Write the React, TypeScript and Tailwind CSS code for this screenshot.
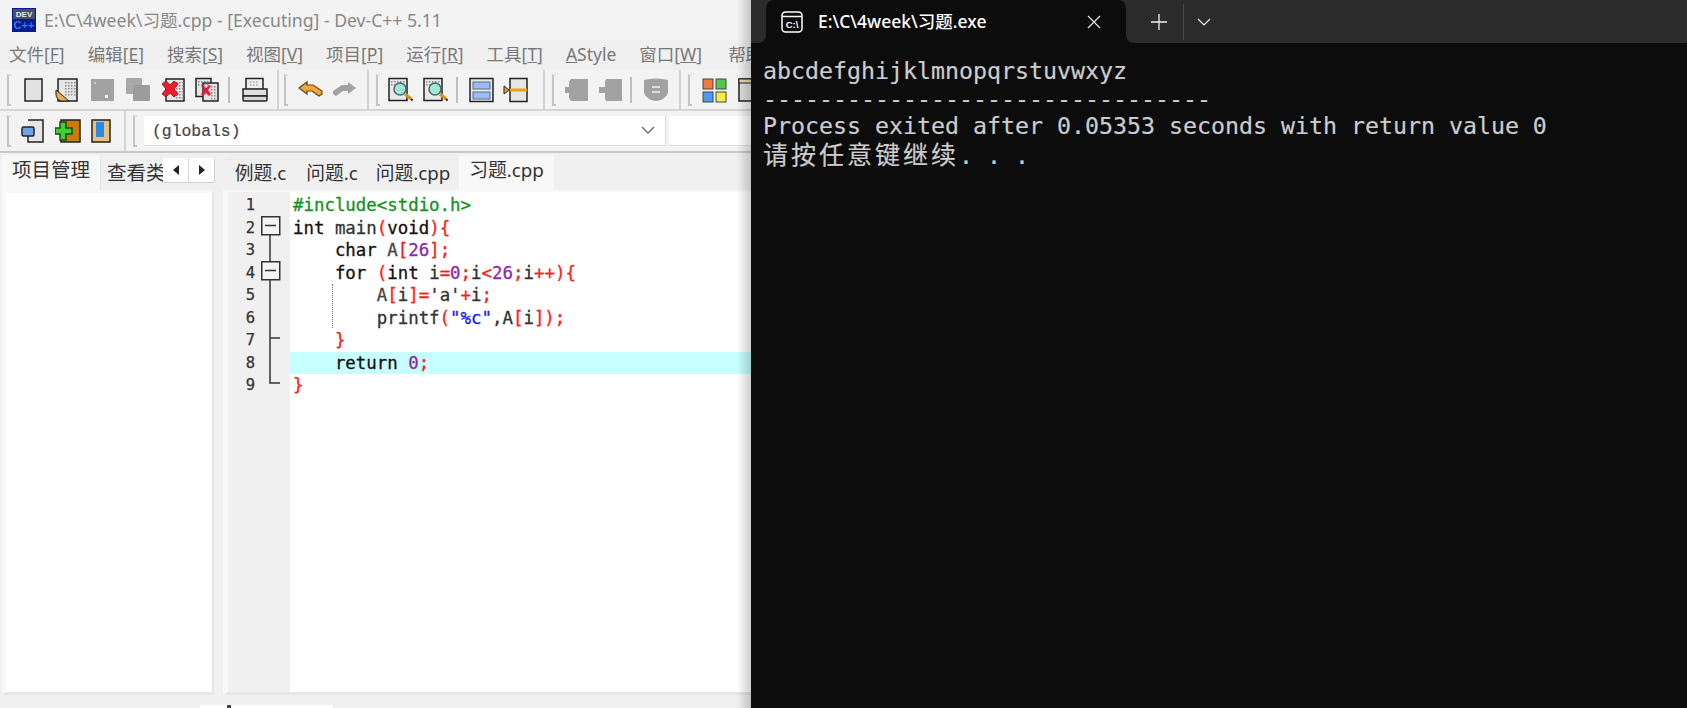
import React from "react";

const Grip = ({ className = "" }: { className?: string }) => (
  <div className={`w-[4px] h-[32px] shrink-0 border-l-2 border-b-2 border-t-2 border-l-[#c4c4c4] border-t-[#e0e0e0] border-b-[#c4c4c4] rounded-bl-[1px] ${className}`} />
);
const Sep = ({ className = "" }: { className?: string }) => <div className={`w-[2px] h-[26px] shrink-0 bg-[#c0c0c0] ${className}`} />;

const Ico = ({ w = 26, children, className = "" }: { w?: number; children: React.ReactNode; className?: string }) => (
  <svg width={w} height={26} viewBox={`0 0 ${w} 26`} className={`shrink-0 ${className}`}>
    {children}
  </svg>
);

const dots = (x: number, y: number, cols: number, rows: number) => {
  const r: React.ReactNode[] = [];
  for (let i = 0; i < cols; i++)
    for (let j = 0; j < rows; j++)
      r.push(<rect key={`${i}-${j}`} x={x + i * 3} y={y + j * 3} width={1.5} height={1.5} fill="#8a8a8a" />);
  return r;
};

const Magnifier = ({ className = "" }: { className?: string }) => (
  <Ico w={25} className={className}>
    <rect x="1" y="1.5" width="18" height="22" fill="#e8e8e8" stroke="#222" strokeWidth="1.5" />
    {dots(3, 4, 5, 2)}
    <circle cx="12" cy="12" r="6" fill="#9fe8d8" stroke="#4a6a60" strokeWidth="1.5" />
    <path d="M17 17l6 5" stroke="#d8921c" strokeWidth="3" />
    <path d="M23 22l1.5 1.5" stroke="#222" strokeWidth="2" />
  </Ico>
);

const Toolbar1 = () => (
  <div className="flex items-center h-[41px] border-b-2 border-[#d4d4d4] bg-[#f3f3f3] shrink-0">
    <div className="flex items-center h-full w-[279px] shrink-0 border-r-2 border-[#d2d2d2] pl-[7px]">
      <Grip />
      <Ico w={20} className="ml-[13px]">
        <rect x="1" y="2" width="17" height="22" fill="#e2e2e2" stroke="#222" strokeWidth="1.5" />
      </Ico>
      <Ico w={24} className="ml-[11px]">
        <rect x="3" y="2" width="19" height="22" fill="#e6e6e6" stroke="#222" strokeWidth="1.5" />
        {dots(10, 5, 4, 5)}
        <path d="M1 13l13 11H6q-5-2-5-7z" fill="#f2a94e" stroke="#222" strokeWidth="1" />
      </Ico>
      <Ico w={25} className="ml-[11px]">
        <rect x="1" y="2" width="23" height="22" fill="#a2a2a2" />
        <rect x="15" y="18" width="3" height="3" fill="#f2f2f2" />
        <rect x="4" y="5" width="2" height="2" fill="#c8c8c8" />
      </Ico>
      <Ico w={24} className="ml-[11px]">
        <rect x="0" y="1" width="16" height="16" rx="1" fill="#a8a8a8" />
        <rect x="7" y="8" width="17" height="16" rx="1" fill="#9c9c9c" />
      </Ico>
      <Ico w={24} className="ml-[11px]">
        <rect x="5" y="2" width="18" height="22" fill="#e4e4e4" stroke="#222" strokeWidth="1.5" />
        {dots(15, 5, 3, 6)}
        <path d="M1 7l4-3 4 4 4-4 4 3-4 5 4 5-4 3-4-4-4 4-4-3 4-5z" fill="#ee1c2c" stroke="#7a1018" strokeWidth="0.8" />
      </Ico>
      <Ico w={24} className="ml-[10px]">
        <rect x="1" y="1.5" width="15" height="18" fill="#e4e4e4" stroke="#222" strokeWidth="1.5" />
        <rect x="8" y="6" width="15" height="18" fill="#e4e4e4" stroke="#222" strokeWidth="1.5" />
        {dots(3, 4, 4, 2)}
        {dots(16, 9, 2, 5)}
        <path d="M6 9l2-1 3 3 3-3 2 1-3 4 3 4-2 2-3-3-3 3-2-2 3-4z" fill="#e81c3a" />
      </Ico>
      <Sep className="ml-[9px]" />
      <Ico w={26} className="ml-[12px]">
        <rect x="4" y="1.5" width="17" height="11" fill="#eee" stroke="#222" strokeWidth="1.5" />
        <path d="M8 5h9M8 8h9" stroke="#888" strokeWidth="1" strokeDasharray="1.5 1.5" />
        <rect x="1" y="12" width="24" height="7" fill="#e0e0e0" stroke="#222" strokeWidth="1.5" />
        <rect x="1" y="19" width="24" height="5" rx="1" fill="#d6d6d6" stroke="#222" strokeWidth="1.5" />
      </Ico>
    </div>
    <div className="flex items-center h-full w-[90px] shrink-0 border-r-2 border-[#d2d2d2] pl-[5px]">
      <Grip />
      <Ico w={25} className="ml-[10px]">
        <path d="M1 11L9 5v3h6l9 6v3l-3 2-7-5H9v3z" fill="#f2a63c" stroke="#5c4a1e" strokeWidth="1.2" />
      </Ico>
      <Ico w={25} className="ml-[9px]">
        <path d="M24 11L16 5v3h-6L1 14v3l3 2 7-5h5v3z" fill="#a2a2a2" />
      </Ico>
    </div>
    <div className="flex items-center h-full w-[176px] shrink-0 border-r-2 border-[#d2d2d2] pl-[7px]">
      <Grip />
      <Magnifier className="ml-[8px]" />
      <Magnifier className="ml-[10px]" />
      <Sep className="ml-[8px]" />
      <Ico w={25} className="ml-[11px]">
        <rect x="1" y="1.5" width="23" height="23" fill="#e6e6e6" stroke="#222" strokeWidth="1.5" />
        <rect x="4" y="5" width="17" height="7" fill="#9cbcf0" stroke="#5a6a90" />
        <rect x="4" y="15" width="17" height="7" fill="#9cbcf0" stroke="#5a6a90" />
      </Ico>
      <Ico w={25} className="ml-[9px]">
        <rect x="7" y="1.5" width="17" height="23" fill="#e6e6e6" stroke="#222" strokeWidth="1.5" />
        <rect x="7" y="11.5" width="17" height="3" fill="#eca01c" />
        <path d="M1 9l5 4-5 4z" fill="#eca01c" stroke="#222" />
      </Ico>
    </div>
    <div className="flex items-center h-full w-[136px] shrink-0 border-r-2 border-[#d2d2d2] pl-[7px]">
      <Grip />
      <Ico w={25} className="ml-[8px]">
        <path d="M7 2h17v22H7l-2-3V16H1V10h4V5z" fill="#a2a2a2" />
      </Ico>
      <Ico w={25} className="ml-[9px]">
        <path d="M8 2h16v22H8l-1-2V16H1V10h6V4z" fill="#a2a2a2" />
      </Ico>
      <Sep className="ml-[7px]" />
      <Ico w={25} className="ml-[11px]">
        <path d="M1 3q12-3 24 0v13q-3 7-12 8-9-1-12-8z" fill="#a2a2a2" />
        <path d="M9 10h8M9 15h8" stroke="#f2f2f2" strokeWidth="1.5" />
      </Ico>
    </div>
    <div className="flex items-center h-full pl-[7px] shrink-0">
      <Grip />
      <Ico w={25} className="ml-[10px]">
        <rect x="1" y="2" width="10" height="10" fill="#f07a3c" stroke="#444" />
        <rect x="14" y="2" width="10" height="10" fill="#52c84a" stroke="#444" />
        <rect x="1" y="15" width="10" height="10" fill="#4a9cf0" stroke="#444" />
        <rect x="14" y="15" width="10" height="10" fill="#f4ec42" stroke="#444" />
      </Ico>
      <Ico w={25} className="ml-[11px]">
        <rect x="1" y="2" width="23" height="22" fill="#e0e0e0" stroke="#222" strokeWidth="1.5" />
        <rect x="1" y="2" width="23" height="4" fill="#eed9b0" stroke="#222" strokeWidth="1" />
      </Ico>
    </div>
  </div>
);

const Toolbar2 = () => (
  <div className="flex items-center h-[42px] border-b-2 border-[#c8c8c8] bg-[#f3f3f3] shrink-0">
    <div className="flex items-center h-full w-[126px] shrink-0 border-r-2 border-[#d2d2d2] pl-[7px]">
      <Grip />
      <Ico w={24} className="ml-[10px]">
        <path d="M7 2h15v22H7v-6" fill="#e4e4e4" stroke="#222" strokeWidth="1.5" />
        <rect x="1" y="9" width="12" height="9" rx="1.5" fill="#6fa4e8" stroke="#223" strokeWidth="1.5" />
      </Ico>
      <Ico w={26} className="ml-[10px]">
        <rect x="6" y="2" width="19" height="22" fill="#cc7a0c" stroke="#222" strokeWidth="1.5" />
        <path d="M5 4h6v6h6v6h-6v6H5v-6H0v-6h5z" fill="#40d030" stroke="#1a4a14" strokeWidth="1.5" />
      </Ico>
      <Ico w={20} className="ml-[10px]">
        <rect x="1" y="2" width="18" height="22" fill="#e8c080" stroke="#222" strokeWidth="1.5" />
        <rect x="5" y="4" width="8" height="15" fill="#2e8ae0" />
      </Ico>
    </div>
    <div className="flex items-center h-full flex-1 pl-[7px] min-w-0">
      <Grip />
      <div className="ml-[7px] w-[522px] h-[30px] bg-white border-b border-r border-[#dcdcdc] flex items-center justify-between pl-[8px] pr-[10px] shrink-0">
        <span className="font-['Liberation_Mono',monospace] text-[16.4px] text-[#444] [-webkit-text-stroke:0.2px] pt-[3px]">(globals)</span>
        <svg width="14" height="9" viewBox="0 0 14 9">
          <path d="M1 1l6 6 6-6" fill="none" stroke="#666" strokeWidth="1.3" />
        </svg>
      </div>
      <div className="ml-[3px] flex-1 h-[30px] bg-white border-b border-[#dcdcdc]" />
    </div>
  </div>
);

const tabText = "font-['Noto_Sans','Noto_Sans_CJK_SC',sans-serif] text-[18.8px] text-[#333]";

const T = ({ c, children }: { c: string; children: React.ReactNode }) => <span style={{ color: c }}>{children}</span>;
const R = ({ children }: { children: React.ReactNode }) => <T c="#ff1a1a">{children}</T>;
const P = ({ children }: { children: React.ReactNode }) => <T c="#8b2aa8">{children}</T>;

const code: React.ReactNode[] = [
  <T c="#14921e">{"#include<stdio.h>"}</T>,
  <><T c="#111">int </T><T c="#333">main</T><R>(</R><T c="#111">void</T><R>){"{"}</R></>,
  <><T c="#111">    char </T><T c="#444">A</T><R>[</R><P>26</P><R>];</R></>,
  <><T c="#111">    for </T><R>(</R><T c="#111">int </T><T c="#333">i</T><R>=</R><P>0</P><R>;</R><T c="#333">i</T><R>{"<"}</R><P>26</P><R>;</R><T c="#333">i</T><R>++){"{"}</R></>,
  <><T c="#444">        A</T><R>[</R><T c="#333">i</T><R>]=</R><T c="#333">'a'</T><R>+</R><T c="#333">i</T><R>;</R></>,
  <><T c="#333">        printf</T><R>(</R><T c="#1a1af0">"%c"</T><T c="#333">,A</T><R>[</R><T c="#333">i</T><R>]);</R></>,
  <><R>{"    }"}</R></>,
  <><T c="#111">    return </T><P>0</P><R>;</R></>,
  <><R>{"}"}</R></>,
];

const Fold = () => (
  <svg width="27" height="203" viewBox="0 0 27 203" className="shrink-0">
    <path d="M9 35V191H19M9 146H19" fill="none" stroke="#333" strokeWidth="1.5" />
    <rect x="0.75" y="24.75" width="18" height="18" fill="#f4f4f4" stroke="#333" strokeWidth="1.5" />
    <path d="M4 33.5h11" stroke="#333" strokeWidth="1.5" />
    <rect x="0.75" y="69.75" width="18" height="18" fill="#f4f4f4" stroke="#333" strokeWidth="1.5" />
    <path d="M4 78.5h11" stroke="#333" strokeWidth="1.5" />
  </svg>
);

const Left = () => (
  <div className="w-[751px] shrink-0 h-full bg-[#f0f0f0] flex flex-col overflow-hidden relative">
    <div className="h-[40px] bg-[#f3f3f3] flex items-center pl-[12px] shrink-0">
      <svg width="24" height="24" viewBox="0 0 24 24" className="shrink-0">
        <rect width="24" height="24" fill="#0a1a90" />
        <rect x="1" y="1" width="22" height="10" fill="#44506a" />
        <text x="12" y="9" textAnchor="middle" fontSize="8" fontWeight="700" fill="#e8e8f0" fontFamily="Liberation Sans">DEV</text>
        <text x="12" y="21" textAnchor="middle" fontSize="11" fontWeight="700" fill="#3a7ae0" fontFamily="Liberation Sans">C++</text>
      </svg>
      <span className="ml-[8px] font-['Noto_Sans','Noto_Sans_CJK_SC',sans-serif] text-[17.6px] text-[#888] whitespace-nowrap">E:\C\4week\习题.cpp - [Executing] - Dev-C++ 5.11</span>
    </div>
    <div className="h-[30px] bg-[#f0f0f0] flex items-center pl-[9px] pb-[2px] gap-[23px] font-['Noto_Sans','Noto_Sans_CJK_SC',sans-serif] text-[17.5px] text-[#787878] whitespace-nowrap shrink-0">
      {[["文件", "F"], ["编辑", "E"], ["搜索", "S"], ["视图", "V"], ["项目", "P"], ["运行", "R"], ["工具", "T"]].map(([a, b]) => (
        <span key={a}>{a}[<span className="underline">{b}</span>]</span>
      ))}
      <span><span className="underline">A</span>Style</span>
      <span>窗口[<span className="underline">W</span>]</span>
      <span className="ml-[3px]">帮助</span>
    </div>
    <Toolbar1 />
    <Toolbar2 />
    <div className="flex flex-1 min-h-0 pt-[2px]">
      <div className="w-[219px] shrink-0 flex flex-col pl-[2px] pr-[5px]">
        <div className="h-[35px] flex items-end relative shrink-0">
          <div className={`w-[98px] shrink-0 h-[35px] pb-[5px] bg-[#f8f8f8] flex items-center justify-center ${tabText} text-[19.5px]`}>项目管理</div>
          <div className={`flex-1 min-w-0 h-[31px] pb-[3px] bg-[#f0f0f0] border-l border-[#e0e0e0] flex items-center pl-[6px] overflow-hidden whitespace-nowrap ${tabText} text-[19.5px]`}>查看类</div>
          <div className="absolute left-[161px] top-[3px] w-[52px] h-[25px] bg-white flex border-b border-r border-[#cfcfcf] rounded-[2px]">
            <div className="flex-1 flex items-center justify-center border-r border-[#d8d8d8]">
              <svg width="6" height="10" viewBox="0 0 6 10"><path d="M6 0v10L0 5z" fill="#222" /></svg>
            </div>
            <div className="flex-1 flex items-center justify-center">
              <svg width="6" height="10" viewBox="0 0 6 10"><path d="M0 0v10l6-5z" fill="#222" /></svg>
            </div>
          </div>
        </div>
        <div className="flex-1 bg-white border-l-[4px] border-t-[3px] border-r-[2px] border-b-[3px] border-[#f8f8f8] border-b-[#e6e6e6] border-r-[#e6e6e6] mb-[13px]" />
      </div>
      <div className="flex-1 min-w-0 flex flex-col pl-[4px]">
        <div className="h-[35px] flex items-end gap-[2px] pl-[3px] whitespace-nowrap shrink-0">
          <div className={`w-[69px] h-[31px] pb-[3px] bg-[#f0f0f0] border-t border-[#e8e8e8] flex items-center justify-center ${tabText}`}>例题.c</div>
          <div className={`w-[70px] h-[31px] pb-[3px] bg-[#f0f0f0] border-t border-[#e8e8e8] flex items-center justify-center ${tabText}`}>问题.c</div>
          <div className={`w-[88px] h-[31px] pb-[3px] bg-[#f0f0f0] border-t border-[#e8e8e8] flex items-center justify-center ${tabText}`}>问题.cpp</div>
          <div className={`w-[95px] h-[35px] pb-[5px] bg-[#f8f8f8] flex items-center justify-center ${tabText}`}>习题.cpp</div>
        </div>
        <div className="flex-1 min-h-0 bg-white border-l-[5px] border-t-[2px] border-b-[3px] border-[#f8f8f8] border-b-[#e6e6e6] mb-[13px] flex font-['DejaVu_Sans_Mono',monospace]">
          <div className="w-[62px] shrink-0 bg-[#f0f0f0] flex">
            <div className="w-[33px] pr-[6px] pt-[2px] shrink-0 text-right text-[15.5px] text-[#333] [-webkit-text-stroke:0.25px]">
              {[1, 2, 3, 4, 5, 6, 7, 8, 9].map((n) => (
                <div key={n} className="h-[22.5px] leading-[22.5px]">{n}</div>
              ))}
            </div>
            <Fold />
          </div>
          <div className="flex-1 min-w-0 relative pt-[2px] pl-[3px] text-[17.4px] whitespace-pre [-webkit-text-stroke:0.3px]">
            {code.map((c, i) => (
              <div key={i} className={`h-[22.5px] leading-[22.5px] -ml-[3px] pl-[3px] ${i === 7 ? "bg-[#c8ffff]" : ""}`}>{c}</div>
            ))}
            <div className="absolute left-[42px] top-[92px] h-[44px] border-l border-dotted border-[#777]" />
          </div>
        </div>
      </div>
    </div>
    <div className="absolute left-[200px] top-[705px] w-[133px] h-[3px] bg-white">
      <div className="absolute left-[27px] top-0 w-[4px] h-[3px] bg-[#444]" />
    </div>
    <div className="absolute right-0 top-0 bottom-0 w-[14px] bg-gradient-to-r from-transparent to-[#00000030]" />
  </div>
);

const Right = () => (
  <div className="flex-1 min-w-0 h-full bg-[#0c0c0c] flex flex-col">
    <div className="h-[43px] flex shrink-0">
      <div className="w-[15px] h-full bg-[#2b2b2b] rounded-br-[8px]" />
      <div className="w-[360px] h-full bg-[#2b2b2b] shrink-0">
        <div className="w-full h-full bg-[#0c0c0c] rounded-t-[8px] flex items-center pl-[15px]">
          <svg width="22" height="22" viewBox="0 0 22 22" className="shrink-0">
            <rect x="1" y="1" width="20" height="20" rx="3.5" fill="none" stroke="#fff" strokeWidth="1.5" />
            <path d="M1 5.5h20" stroke="#fff" strokeWidth="1.5" />
            <text x="11" y="16.5" textAnchor="middle" fontSize="9.5" fontWeight="700" fill="#fff" fontFamily="Liberation Sans">C:\</text>
          </svg>
          <span className="ml-[15px] font-['Noto_Sans','Noto_Sans_CJK_SC',sans-serif] text-[17.5px] font-medium text-white whitespace-nowrap">E:\C\4week\习题.exe</span>
          <svg width="14" height="14" viewBox="0 0 14 14" className="ml-auto mr-[25px] shrink-0">
            <path d="M1 1l12 12M13 1L1 13" stroke="#e8e8e8" strokeWidth="1.2" />
          </svg>
        </div>
      </div>
      <div className="flex-1 h-full flex items-center bg-[#2b2b2b] rounded-bl-[8px]">
        <svg width="16" height="16" viewBox="0 0 16 16" className="ml-[25px] shrink-0">
          <path d="M8 0v16M0 8h16" stroke="#f0f0f0" strokeWidth="1.3" />
        </svg>
        <div className="ml-[16px] w-[1px] h-[36px] bg-[#4a4a4a]" />
        <svg width="14" height="8" viewBox="0 0 14 8" className="ml-[13px] shrink-0">
          <path d="M1 1l6 6 6-6" fill="none" stroke="#e8e8e8" strokeWidth="1.2" />
        </svg>
      </div>
    </div>
    <div className="pl-[12px] pt-[14px] font-['DejaVu_Sans_Mono','Noto_Sans_CJK_SC',monospace] text-[23.25px] leading-[27.5px] text-[#cccccc] whitespace-pre [-webkit-text-stroke:0.2px]">
      <div>abcdefghijklmnopqrstuvwxyz</div>
      <div>--------------------------------</div>
      <div>Process exited after 0.05353 seconds with return value 0</div>
      <div className="h-[27.5px]"><span className="text-[25px] tracking-[3px] font-['Noto_Sans_CJK_SC',sans-serif] leading-[27.5px]">请按任意键继续</span>. . .</div>
    </div>
  </div>
);

export default function App() {
  return (
    <div className="w-[1687px] h-[708px] flex overflow-hidden">
      <Left />
      <Right />
    </div>
  );
}
